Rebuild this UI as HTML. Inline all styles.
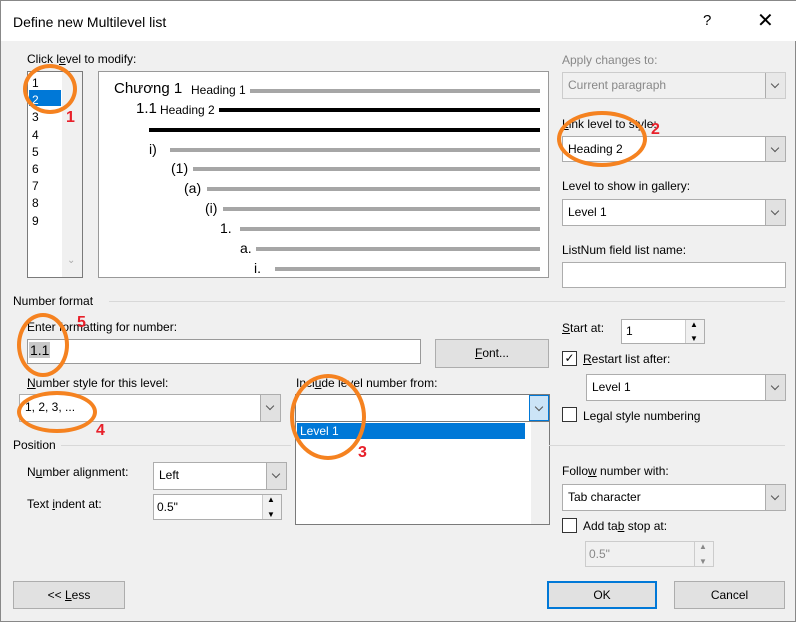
<!DOCTYPE html>
<html><head><meta charset="utf-8"><style>
*{box-sizing:border-box;margin:0;padding:0}
body{width:796px;height:622px;background:#f0f0f0;font-family:"Liberation Sans",sans-serif;font-size:12px;color:#000;position:relative;overflow:hidden;border:1px solid #888}
.a{position:absolute;white-space:nowrap}
.box{position:absolute;background:#fff;border:1px solid #7a7a7a}
.dd{position:absolute;background:#fff;border:1px solid #adadad;padding-left:5px;line-height:25px}
.dd .ar{position:absolute;right:0;top:0;bottom:0;width:20px;background:#e1e1e1;border-left:1px solid #adadad}
.dd .ar:after{content:"";position:absolute;left:6px;top:8px;width:5px;height:5px;border-right:1px solid #555;border-bottom:1px solid #555;transform:rotate(45deg)}
.btn{position:absolute;background:#e1e1e1;border:1px solid #adadad;text-align:center;line-height:26px}
.cb{position:absolute;width:15px;height:15px;background:#fff;border:1px solid #333}
.ln{position:absolute;height:1px;background:#d8d8d8}
.gl{position:absolute;height:4px;background:#a6a6a6}
.circ{position:absolute;border:4px solid #f58220;border-radius:50%}
.rn{position:absolute;color:#e8202a;font-weight:bold;font-size:16px}
.spin{position:absolute;right:0;top:0;bottom:0;width:19px;background:#f0f0f0;border-left:1px solid #ccc}
.spin:before{content:"▲";position:absolute;top:0;left:4px;font-size:8px}
.spin:after{content:"▼";position:absolute;bottom:0;left:4px;font-size:8px}
u{text-decoration:underline}
</style></head><body>
<div class="a" style="left:0;top:0;width:796px;height:40px;background:#fff"></div>
<div class="a" style="left:12px;top:13px;font-size:14px">Define new Multilevel list</div>
<div class="a" style="left:702px;top:11px;font-size:15px">?</div>
<div class="a" style="left:756px;top:7px;font-size:20px">✕</div>

<div class="a" style="left:26px;top:51px">Click l<u>e</u>vel to modify:</div>
<div class="box" style="left:26px;top:70px;width:56px;height:207px"></div>
<div class="a" style="left:61px;top:71px;width:20px;height:205px;background:#f0f0f0"></div>
<div class="a" style="left:28px;top:89px;width:32px;height:16px;background:#0078d7"></div>
<div class="a" style="left:31px;top:74px;line-height:17.2px">1<br><span style="color:#fff">2</span><br>3<br>4<br>5<br>6<br>7<br>8<br>9</div>
<div class="a" style="left:66px;top:254px;color:#aaa;font-size:10px">⌄</div>

<div class="box" style="left:97px;top:70px;width:451px;height:207px;border-color:#999"></div>
<div class="a" style="left:113px;top:79px;font-size:15px">Chương 1</div>
<div class="a" style="left:190px;top:82px;font-size:12px">Heading 1</div>
<div class="gl" style="left:249px;top:88px;width:290px"></div>
<div class="a" style="left:135px;top:99px;font-size:15px">1.1</div>
<div class="a" style="left:159px;top:102px">Heading 2</div>
<div class="gl" style="left:218px;top:107px;width:321px;background:#000"></div>
<div class="gl" style="left:148px;top:127px;width:391px;background:#000"></div>
<div class="a" style="left:148px;top:140px;font-size:14px">i)</div><div class="gl" style="left:169px;top:147px;width:370px"></div>
<div class="a" style="left:170px;top:159px;font-size:14px">(1)</div><div class="gl" style="left:192px;top:166px;width:347px"></div>
<div class="a" style="left:183px;top:179px;font-size:14px">(a)</div><div class="gl" style="left:206px;top:186px;width:333px"></div>
<div class="a" style="left:204px;top:199px;font-size:14px">(i)</div><div class="gl" style="left:222px;top:206px;width:317px"></div>
<div class="a" style="left:219px;top:219px;font-size:14px">1.</div><div class="gl" style="left:239px;top:226px;width:300px"></div>
<div class="a" style="left:239px;top:239px;font-size:14px">a.</div><div class="gl" style="left:255px;top:246px;width:284px"></div>
<div class="a" style="left:253px;top:259px;font-size:14px">i.</div><div class="gl" style="left:274px;top:266px;width:265px"></div>

<div class="a" style="left:561px;top:52px;color:#888">Apply changes to:</div>
<div class="dd" style="left:561px;top:71px;width:224px;height:27px;background:#f0f0f0;border-color:#ccc;color:#888">Current paragraph<span class="ar" style="background:#e8e8e8"></span></div>
<div class="a" style="left:561px;top:116px"><u>L</u>ink level to style:</div>
<div class="dd" style="left:561px;top:135px;width:224px;height:26px">Heading 2<span class="ar"></span></div>
<div class="a" style="left:561px;top:178px">Level to show in gallery:</div>
<div class="dd" style="left:561px;top:198px;width:224px;height:27px">Level 1<span class="ar"></span></div>
<div class="a" style="left:561px;top:242px">ListNum field list name:</div>
<div class="dd" style="left:561px;top:261px;width:224px;height:26px"></div>

<div class="a" style="left:12px;top:293px">Number format</div>
<div class="ln" style="left:108px;top:300px;width:676px"></div>
<div class="a" style="left:26px;top:319px">Enter formatting for number:</div>
<div class="box" style="left:26px;top:338px;width:394px;height:25px;border-color:#999"></div>
<div class="a" style="left:28px;top:341px;font-size:14px;background:#c8c8c8;padding:0 1px">1.1</div>
<div class="btn" style="left:434px;top:338px;width:114px;height:29px;line-height:27px"><u>F</u>ont...</div>
<div class="a" style="left:561px;top:320px"><u>S</u>tart at:</div>
<div class="box" style="left:620px;top:318px;width:84px;height:25px;border-color:#adadad;padding:4px 4px">1<span class="spin"></span></div>
<div class="cb" style="left:561px;top:350px;text-align:center;line-height:13px;font-size:12px">✓</div>
<div class="a" style="left:582px;top:351px"><u>R</u>estart list after:</div>
<div class="dd" style="left:585px;top:373px;width:200px;height:27px">Level 1<span class="ar"></span></div>
<div class="cb" style="left:561px;top:406px"></div>
<div class="a" style="left:582px;top:408px">Le<u>g</u>al style numbering</div>

<div class="a" style="left:26px;top:375px"><u>N</u>umber style for this level:</div>
<div class="dd" style="left:18px;top:393px;width:262px;height:28px">1, 2, 3, ...<span class="ar"></span></div>
<div class="a" style="left:295px;top:375px">Incl<u>u</u>de level number from:</div>
<div class="dd" style="left:294px;top:393px;width:255px;height:28px;border-color:#7a7a7a"><span class="ar" style="background:#cce4f7;border:1px solid #0078d7"></span></div>
<div class="box" style="left:294px;top:420px;width:255px;height:104px;border-color:#7a7a7a"></div>
<div class="a" style="left:530px;top:421px;width:18px;height:102px;background:#f0f0f0"></div>
<div class="a" style="left:296px;top:422px;width:228px;height:16px;background:#0078d7;color:#fff;padding-left:3px;line-height:16px">Level 1</div>

<div class="a" style="left:12px;top:437px">Position</div>
<div class="ln" style="left:60px;top:444px;width:230px"></div>
<div class="ln" style="left:548px;top:444px;width:236px"></div>
<div class="a" style="left:26px;top:464px">N<u>u</u>mber alignment:</div>
<div class="dd" style="left:152px;top:461px;width:134px;height:28px">Left<span class="ar"></span></div>
<div class="a" style="left:26px;top:496px">Text <u>i</u>ndent at:</div>
<div class="box" style="left:152px;top:493px;width:129px;height:26px;border-color:#adadad;padding:5px 3px">0.5"<span class="spin"></span></div>
<div class="a" style="left:561px;top:463px">Follo<u>w</u> number with:</div>
<div class="dd" style="left:561px;top:483px;width:224px;height:27px">Tab character<span class="ar"></span></div>
<div class="cb" style="left:561px;top:517px"></div>
<div class="a" style="left:582px;top:518px">Add ta<u>b</u> stop at:</div>
<div class="box" style="left:584px;top:540px;width:129px;height:26px;border-color:#ccc;background:#f0f0f0;color:#888;padding:5px 3px">0.5"<span class="spin" style="color:#888"></span></div>

<div class="btn" style="left:12px;top:580px;width:112px;height:28px">&lt;&lt; <u>L</u>ess</div>
<div class="btn" style="left:546px;top:580px;width:110px;height:28px;border:2px solid #0078d7;line-height:24px">OK</div>
<div class="btn" style="left:673px;top:580px;width:111px;height:28px">Cancel</div>

<div class="circ" style="left:22px;top:63px;width:54px;height:50px"></div>
<div class="rn" style="left:65px;top:108px">1</div>
<div class="circ" style="left:556px;top:110px;width:90px;height:56px"></div>
<div class="rn" style="left:650px;top:120px">2</div>
<div class="circ" style="left:289px;top:373px;width:76px;height:86px"></div>
<div class="rn" style="left:357px;top:443px">3</div>
<div class="circ" style="left:16px;top:390px;width:80px;height:42px"></div>
<div class="rn" style="left:95px;top:421px">4</div>
<div class="circ" style="left:16px;top:312px;width:52px;height:64px"></div>
<div class="rn" style="left:76px;top:313px">5</div>
</body></html>
